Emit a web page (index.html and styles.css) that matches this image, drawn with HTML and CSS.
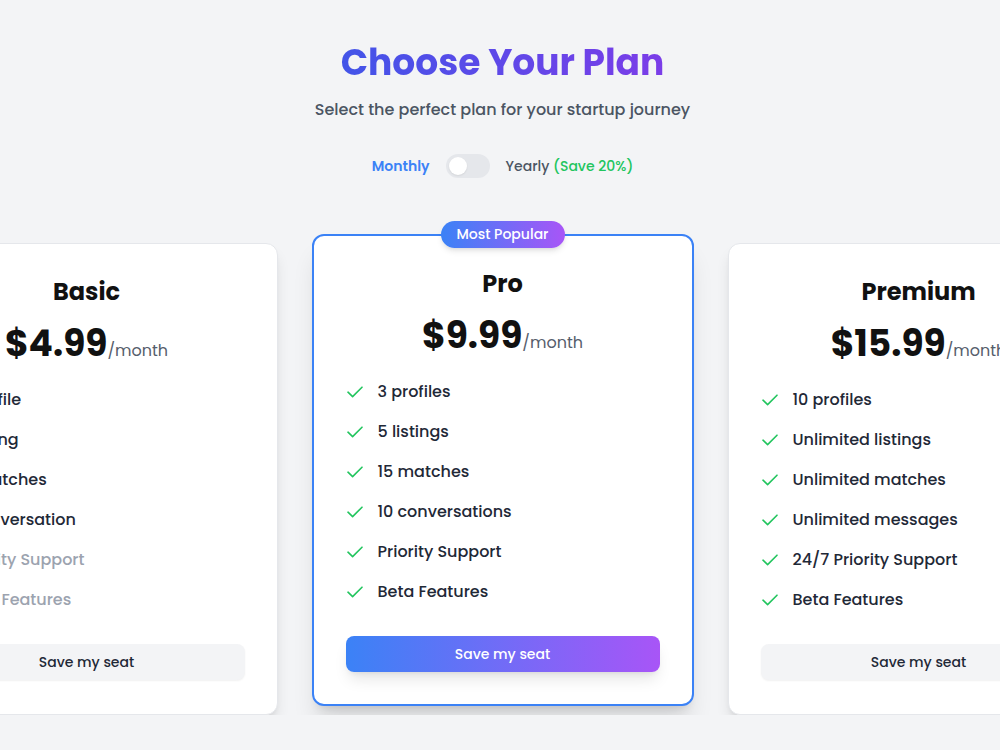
FILE: index.html
```html
<!DOCTYPE html>
<html lang="en">
  <head>
    <meta charset="utf-8">
    <link rel="stylesheet" href="styles.css">
    <title>Pricing</title>
  </head>
  <body>
    <div class="page">
      <header class="intro">
        <h1 class="title">Choose Your Plan</h1>
        <p class="subtitle">Select the perfect plan for your startup journey</p>
        <div class="billing">
          <span class="billing-label active">Monthly</span>
          <button class="switch" type="button"><span class="knob"></span></button>
          <span class="billing-label">Yearly <span class="save">(Save 20%)</span></span>
        </div>
      </header>

      <div class="plans">
        <!-- basic -->
        <div class="plan">
          <h2 class="plan-name">Basic</h2>
          <div class="plan-price"><span class="amount">$4.99</span><span class="period">/month</span></div>
          <ul class="features">
            <li class="feature">
              <svg class="icon" width="16" height="12" viewBox="0 0 16 12"><path d="M1 6.2l4.6 4.4L15 1.2"/></svg>
              1 profile
            </li>
            <li class="feature">
              <svg class="icon" width="16" height="12" viewBox="0 0 16 12"><path d="M1 6.2l4.6 4.4L15 1.2"/></svg>
              1 listing
            </li>
            <li class="feature">
              <svg class="icon" width="16" height="12" viewBox="0 0 16 12"><path d="M1 6.2l4.6 4.4L15 1.2"/></svg>
              5 matches
            </li>
            <li class="feature">
              <svg class="icon" width="16" height="12" viewBox="0 0 16 12"><path d="M1 6.2l4.6 4.4L15 1.2"/></svg>
              1 conversation
            </li>
            <li class="feature off">
              <svg class="icon" width="16" height="12" viewBox="0 0 16 12"><path d="M3 1l10 10M13 1L3 11"/></svg>
              Priority Support
            </li>
            <li class="feature off">
              <svg class="icon" width="16" height="12" viewBox="0 0 16 12"><path d="M3 1l10 10M13 1L3 11"/></svg>
              Beta Features
            </li>
          </ul>
          <button class="btn" type="button">Save my seat</button>
        </div>

        <!-- pro -->
        <div class="plan plan-popular">
          <span class="badge">Most Popular</span>
          <h2 class="plan-name">Pro</h2>
          <div class="plan-price"><span class="amount">$9.99</span><span class="period">/month</span></div>
          <ul class="features">
            <li class="feature">
              <svg class="icon" width="16" height="12" viewBox="0 0 16 12"><path d="M1 6.2l4.6 4.4L15 1.2"/></svg>
              3 profiles
            </li>
            <li class="feature">
              <svg class="icon" width="16" height="12" viewBox="0 0 16 12"><path d="M1 6.2l4.6 4.4L15 1.2"/></svg>
              5 listings
            </li>
            <li class="feature">
              <svg class="icon" width="16" height="12" viewBox="0 0 16 12"><path d="M1 6.2l4.6 4.4L15 1.2"/></svg>
              15 matches
            </li>
            <li class="feature">
              <svg class="icon" width="16" height="12" viewBox="0 0 16 12"><path d="M1 6.2l4.6 4.4L15 1.2"/></svg>
              10 conversations
            </li>
            <li class="feature">
              <svg class="icon" width="16" height="12" viewBox="0 0 16 12"><path d="M1 6.2l4.6 4.4L15 1.2"/></svg>
              Priority Support
            </li>
            <li class="feature">
              <svg class="icon" width="16" height="12" viewBox="0 0 16 12"><path d="M1 6.2l4.6 4.4L15 1.2"/></svg>
              Beta Features
            </li>
          </ul>
          <button class="btn btn-primary" type="button">Save my seat</button>
        </div>

        <!-- premium -->
        <div class="plan">
          <h2 class="plan-name">Premium</h2>
          <div class="plan-price"><span class="amount">$15.99</span><span class="period">/month</span></div>
          <ul class="features">
            <li class="feature">
              <svg class="icon" width="16" height="12" viewBox="0 0 16 12"><path d="M1 6.2l4.6 4.4L15 1.2"/></svg>
              10 profiles
            </li>
            <li class="feature">
              <svg class="icon" width="16" height="12" viewBox="0 0 16 12"><path d="M1 6.2l4.6 4.4L15 1.2"/></svg>
              Unlimited listings
            </li>
            <li class="feature">
              <svg class="icon" width="16" height="12" viewBox="0 0 16 12"><path d="M1 6.2l4.6 4.4L15 1.2"/></svg>
              Unlimited matches
            </li>
            <li class="feature">
              <svg class="icon" width="16" height="12" viewBox="0 0 16 12"><path d="M1 6.2l4.6 4.4L15 1.2"/></svg>
              Unlimited messages
            </li>
            <li class="feature">
              <svg class="icon" width="16" height="12" viewBox="0 0 16 12"><path d="M1 6.2l4.6 4.4L15 1.2"/></svg>
              24/7 Priority Support
            </li>
            <li class="feature">
              <svg class="icon" width="16" height="12" viewBox="0 0 16 12"><path d="M1 6.2l4.6 4.4L15 1.2"/></svg>
              Beta Features
            </li>
          </ul>
          <button class="btn" type="button">Save my seat</button>
        </div>
      </div>
    </div>
  </body>
</html>
```

FILE: styles.css
```css
html,
body {
  margin: 0;
  padding: 0;
  background-color: #f3f4f6;
  overflow: hidden;
}
body {
  font-family: "Poppins", "Inter", sans-serif;
  color: #111827;
}
.page {
  padding: 43px 0 0 5px;
  overflow: hidden;
}

/* heading */
.intro {
  text-align: center;
}
.title {
  margin: 0 0 13px;
  font-size: 36px;
  line-height: 40px;
  font-weight: 700;
  background: linear-gradient(90deg, #4254e8, #7b3de8);
  -webkit-background-clip: text;
  background-clip: text;
  color: transparent;
  display: inline-block;
}
.subtitle {
  margin: 0;
  font-size: 16px;
  line-height: 28px;
  font-weight: 500;
  color: #4b5563;
}
.billing {
  margin-top: 30px;
  display: flex;
  justify-content: center;
  align-items: center;
  gap: 16px;
  font-size: 14px;
}
.billing-label {
  color: #4b5563;
  font-weight: 500;
}
.billing-label.active {
  color: #3b82f6;
  font-weight: 600;
}
.save {
  color: #22c55e;
}
.switch {
  width: 44px;
  height: 24px;
  padding: 0;
  border: none;
  border-radius: 12px;
  background-color: #e5e7eb;
  display: flex;
  align-items: center;
}
.knob {
  width: 18px;
  height: 18px;
  margin-left: 3px;
  border-radius: 50%;
  background-color: #fff;
  box-shadow: 0 1px 2px rgba(0, 0, 0, 0.08);
}

/* plan cards */
.plans {
  margin-top: 65px;
  display: flex;
  justify-content: center;
  gap: 34px;
}
.plan {
  position: relative;
  width: 382px;
  flex-shrink: 0;
  box-sizing: border-box;
  padding: 32px;
  background-color: #fff;
  border: 1px solid #e5e7eb;
  border-radius: 12px;
  box-shadow: 0 10px 15px -3px rgba(0, 0, 0, 0.12), 0 4px 6px -4px rgba(0, 0, 0, 0.12);
}
.plan-popular {
  border: 2px solid #3b82f6;
  transform: translateY(-9px);
  box-shadow: 0 20px 25px -5px rgba(0, 0, 0, 0.12), 0 8px 10px -6px rgba(0, 0, 0, 0.12);
}
.badge {
  position: absolute;
  top: -15px;
  left: 50%;
  transform: translateX(-50%);
  padding: 4px 16px;
  border-radius: 999px;
  background: linear-gradient(90deg, #3b82f6, #a855f7);
  color: #fff;
  font-size: 14px;
  line-height: 19px;
  font-weight: 500;
  white-space: nowrap;
  box-shadow: 0 4px 6px -1px rgba(0, 0, 0, 0.1), 0 2px 4px -2px rgba(0, 0, 0, 0.1);
}
.plan-name {
  margin: 0 0 16px;
  text-align: center;
  font-size: 24px;
  line-height: 32px;
  font-weight: 700;
  color: #111;
}
.plan-price {
  margin-bottom: 17px;
  text-align: center;
  line-height: 40px;
}
.amount {
  font-size: 36px;
  font-weight: 700;
  color: #111;
}
.period {
  font-size: 16px;
  color: #565e6c;
}
.features {
  list-style: none;
  margin: 0 0 32px;
  padding: 0;
  display: flex;
  flex-direction: column;
  gap: 16px;
}
.feature {
  display: flex;
  align-items: center;
  font-size: 16px;
  line-height: 24px;
  font-weight: 500;
  color: #1f2937;
}
.icon {
  flex-shrink: 0;
  margin: 0 15px 0 1px;
  fill: none;
  stroke: #22c55e;
  stroke-width: 1.6;
  stroke-linecap: round;
  stroke-linejoin: round;
}
.feature.off {
  color: #9ca3af;
}
.feature.off .icon {
  stroke: #d1d5db;
}
.btn {
  display: block;
  width: 100%;
  height: 36px;
  border: none;
  border-radius: 8px;
  background-color: #f3f4f6;
  color: #1f2937;
  font-family: inherit;
  font-size: 14px;
  font-weight: 500;
  box-shadow: 0 1px 2px rgba(0, 0, 0, 0.06);
}
.btn-primary {
  background: linear-gradient(90deg, #3b82f6, #a855f7);
  color: #fff;
  box-shadow: 0 10px 15px -3px rgba(0, 0, 0, 0.1), 0 4px 6px -4px rgba(0, 0, 0, 0.1);
}
```
